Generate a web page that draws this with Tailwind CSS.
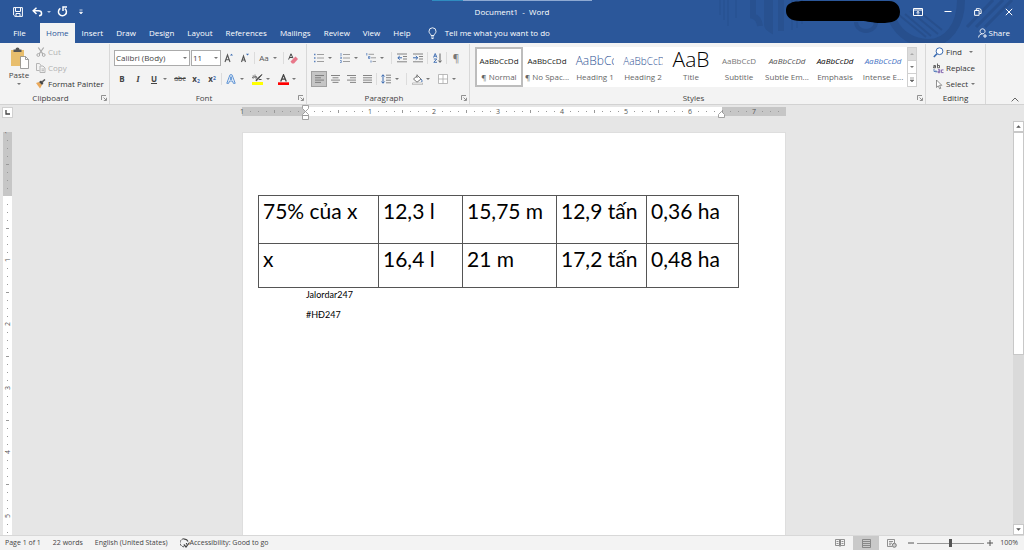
<!DOCTYPE html>
<html lang="en">
<head>
  <meta charset="UTF-8">
  <title>Document1 - Word</title>
  <script src="https://cdn.jsdelivr.net/npm/@tailwindcss/browser@4"></script>
</head>
<body class="h-screen flex flex-col overflow-hidden bg-[#e6e6e6] text-[8px] leading-[10px] text-[#444] font-['Open_Sans',sans-serif]">

  <svg class="hidden">
    <symbol id="caret" viewBox="0 0 6 4"><path d="M1 1h4L3 3z" fill="currentColor"/></symbol>
    <symbol id="launcher" viewBox="0 0 6 6"><path d="M.5 5V.5H5M2.5 2.5L5 5M5.5 2.8v2.7H2.8" fill="none" stroke="#777" stroke-width=".8"/></symbol>
  </svg>

  <!-- Title bar and tabs -->
  <header class="relative shrink-0 bg-[#2b579a] text-white">
    <svg class="absolute top-0 right-0 w-[344px] h-[43px]" viewBox="0 0 344 43" fill="none" stroke="#274f8d">
      <path d="M40 0v15M44 0v20M48 0v26M56 0v18" stroke-width="1.500" stroke="#295393"/>
      <path d="M73 0v16q6 2 7 10M87 0v24q0 3 3 5V0M101 0v31" stroke-width="6" stroke="#285190"/>
      <path d="M112 0v30M117 0v28M122 0v24" stroke-width="1.500" stroke="#295393"/>
      <path d="M176 22a10 9 0 0 0 20 0" stroke-width="4"/>
      <path d="M213 21c7 14 20 22 35 22 20 0 33-18 33-43" stroke-width="8"/>
      <path d="M219 15l27 22M225 14l26 22M230 11l28 23M236 9l26 21" stroke-width="2"/>
      <path d="M287 27L313 0M296 27L323 0M305 27L332 0" stroke-width="3"/>
    </svg>
    <svg class="absolute top-0 left-[432px] w-40 h-px" viewBox="0 0 160 1"><path d="M0 0h31v1H0z" fill="#2f8cc0"/><path d="M31 0h129v1H31z" fill="#8ea9d2"/></svg>

    <div class="relative h-[23px] flex items-center justify-between">
      <div class="w-[440px] flex items-center pl-[13px]">
        <button aria-label="Save" class="w-[19px]"><svg class="size-[10px]" viewBox="0 0 10 10"><path d="M.6.6h8.800v8.800H2L.6 8zM2.500 1v3.500h5V1M3 9V6.500h4V9" fill="none" stroke="#fff"/></svg></button>
        <button aria-label="Undo" class="w-[14px]"><svg class="w-[11px] h-[10px]" viewBox="0 0 11 10"><path d="M4.500.8L1.200 3.800 4.500 7M1.400 3.800h5.100c4 0 4 4.700.5 4.900" fill="none" stroke="#fff" stroke-width="1.500"/></svg></button>
        <svg class="w-[6px] h-1 mr-[5px] text-[#b5c6e0]"><use href="#caret"/></svg>
        <button aria-label="Repeat" class="w-[21px]"><svg class="size-[11px]" viewBox="0 0 11 11"><path d="M3.400 2.400A4 4 0 1 0 7.800 2.600M6 5V1h4" fill="none" stroke="#fff" stroke-width="1.500"/></svg></button>
        <button aria-label="Customize Quick Access Toolbar"><svg class="w-[6px] h-[6px]" viewBox="0 0 6 6"><path d="M1.500 1h3M1.500 3.200h3L3 5z" stroke="#fff" stroke-width=".7" fill="#fff"/></svg></button>
      </div>
      <h1>Document1&nbsp; -&nbsp; Word</h1>
      <div class="w-[440px] flex items-center justify-end pr-[11px]">
        <svg class="w-[116px] h-[23px] mr-[11px]" viewBox="0 0 116 23"><path d="M5 3C8 .8 11 2 15 1h88c8 0 11 6 11 11 0 9-8 11-19 11-9 0-13-2-20-2H14C5 21 0 17 0 11 0 6 2 4 5 3z" fill="#000"/></svg>
        <button aria-label="Ribbon Display Options" class="w-[31px]"><svg class="w-[10px] h-[8px]" viewBox="0 0 10 8"><path d="M.5.500h9v7h-9zM.5 2h9M5 6.500V3.500M3.500 4.800L5 3.400l1.500 1.400" fill="none" stroke="#fff"/></svg></button>
        <button aria-label="Minimize" class="w-[30px]"><svg class="w-[8px] h-[8px]" viewBox="0 0 8 8"><path d="M.5 3.500h7" stroke="#fff"/></svg></button>
        <button aria-label="Restore" class="w-[31px]"><svg class="w-[8px] h-[8px]" viewBox="0 0 8 8"><path d="M.6 2.500h4.500v4.800H.6zM2.300 2V.7h3q1.800 0 1.800 1.800v3H5.500" fill="none" stroke="#fff"/></svg></button>
        <button aria-label="Close"><svg class="w-[8px] h-[8px]" viewBox="0 0 8 8"><path d="M.8.8l6.400 6.400M7.200.8L.8 7.200" stroke="#fff"/></svg></button>
      </div>
    </div>

    <nav class="relative h-5 flex items-stretch gap-px">
      <button class="w-[39px]">File</button>
      <button class="px-[6px] bg-[#f3f3f3] text-[#2b579a]">Home</button>
      <button class="px-[6px]">Insert</button>
      <button class="px-[6px]">Draw</button>
      <button class="px-[6px]">Design</button>
      <button class="px-[6px]">Layout</button>
      <button class="px-[6px]">References</button>
      <button class="px-[6px]">Mailings</button>
      <button class="px-[6px]">Review</button>
      <button class="px-[6px]">View</button>
      <button class="px-[6px]">Help</button>
      <button class="flex items-center gap-2 px-[10px]">
        <svg class="w-[9px] h-3" viewBox="0 0 9 12"><path d="M3 8.500C3 7 1 6.500 1 4.300a3.500 3.500 0 0 1 7 0C8 6.500 6 7 6 8.500zM3 10h3M3.500 11.500h2" fill="none" stroke="#fff" stroke-width=".9"/></svg>
        Tell me what you want to do
      </button>
      <button class="ml-auto mr-[14px] flex items-center gap-[2px]">
        <svg class="w-[9px] h-[10px]" viewBox="0 0 9 10"><path d="M4.500 5.800a2.500 2.500 0 1 1 .1 0M.6 9.500C.8 7 2.500 5.800 4.500 5.800M7 6v4M5 8h4" fill="none" stroke="#fff" stroke-width=".9"/></svg>
        Share
      </button>
    </nav>
  </header>

  <!-- Ribbon -->
  <section class="h-[62px] shrink-0 flex bg-[#f3f3f3] border-b border-[#d2d2d2] pt-px">
    <div class="w-[110px] flex flex-col border-r border-[#d8d8d8]">
      <div class="flex-1 flex">
        <button class="w-[36px] pl-[2px] pt-[3px] flex flex-col items-center">
          <svg class="w-[19px] h-[22px]" viewBox="0 0 19 22"><path d="M1 3h13v16H1z" fill="#e8be6d"/><path d="M3.500 2.500h2a2 2 0 0 1 4 0h2V5h-8z" fill="#555"/><path d="M10.500 9.500h5l3 3v9h-8z" fill="#fff" stroke="#888" stroke-width=".8"/><path d="M15.500 9.500v3h3" fill="none" stroke="#888" stroke-width=".8"/></svg>
          <span class="mt-px">Paste</span>
          <svg class="w-[6px] h-1 mt-[2px] text-[#777]"><use href="#caret"/></svg>
        </button>
        <div class="flex flex-col text-[#b1b1b1]">
          <button class="h-4 flex items-center gap-[2px]"><svg class="size-[10px]" viewBox="0 0 10 10"><path d="M2.300.5l4.500 6.300M7.700.5L3.200 6.800" stroke="#aaa" stroke-width="1.200"/><g fill="none" stroke="#aaa"><circle cx="2.300" cy="8" r="1.400"/><circle cx="7.700" cy="8" r="1.400"/></g></svg>Cut</button>
          <button class="h-4 flex items-center gap-[2px]"><svg class="size-[10px]" viewBox="0 0 10 10"><path d="M3.500 7.500h-3v-7h3l1.500 2M4 3h3l2 2v4.500H4zM5.500 6h2.500M5.500 7.700h2.500" fill="none" stroke="#b5b5b5"/></svg>Copy</button>
          <button class="h-4 flex items-center gap-[2px] text-[#333]"><svg class="size-[10px]" viewBox="0 0 10 10"><path d="M0 4l3-1 3 3-2 3.500z" fill="#eaa95b"/><path d="M3 3l2-1.500L7.500 4 6 6z" fill="#444"/><path d="M6.200 2.800L9 .5" stroke="#555" stroke-width="1.500"/></svg>Format Painter</button>
        </div>
      </div>
      <div class="h-3 flex items-center"><span class="flex-1 text-center">Clipboard</span><button aria-label="Clipboard options" class="mr-[2px]"><svg class="size-[6px]"><use href="#launcher"/></svg></button></div>
    </div>

    <div class="w-[197px] flex flex-col border-r border-[#d8d8d8]">
      <div class="flex-1 pl-1 flex flex-col pt-[5px] text-[#777]">
        <div class="h-[18px] flex items-center">
          <label class="relative w-[76px]"><select aria-label="Font" class="appearance-none w-full h-4 px-px bg-white border border-[#ababab] text-[#444]"><option>Calibri (Body)</option></select><svg class="absolute right-[2px] top-[6px] w-[6px] h-1"><use href="#caret"/></svg></label>
          <label class="relative w-[30px] ml-px"><select aria-label="Font size" class="appearance-none w-full h-4 px-px bg-white border border-[#ababab] text-[#444]"><option>11</option></select><svg class="absolute right-[2px] top-[6px] w-[6px] h-1"><use href="#caret"/></svg></label>
          <button aria-label="Grow font" class="w-4"><svg class="size-[10px] mx-auto" viewBox="0 0 10 10"><path d="M1 9l2.500-7L6 9M1.800 6.700h3.400" fill="none" stroke="#555" stroke-width="1.100"/><path d="M6 2.500L7.500.8 9 2.500z" fill="#3a6ab0"/></svg></button>
          <button aria-label="Shrink font" class="w-4"><svg class="size-[10px] mx-auto" viewBox="0 0 10 10"><path d="M1.500 9l2-6 2 6M2 7h3" fill="none" stroke="#555" stroke-width="1.100"/><path d="M6 .8h3L7.500 2.500z" fill="#3a6ab0"/></svg></button>
          <span class="w-px h-3 bg-[#dcdcdc] mx-px"></span>
          <button class="w-4 text-center text-[#555]">Aa</button>
          <svg class="w-[6px] h-1 mr-1"><use href="#caret"/></svg>
          <span class="w-px h-3 bg-[#dcdcdc] mx-px"></span>
          <button aria-label="Clear formatting" class="w-4"><svg class="w-[10px] h-[11px] mx-auto" viewBox="0 0 10 11"><path d="M.6 6.500L3 .8l2 4.500M1.500 4.500h3" fill="none" stroke="#444"/><path d="M2.500 8.500l5-5L10 6l-4 4.500H4z" fill="#e8788a"/></svg></button>
        </div>
        <div class="h-6 flex items-center">
          <button class="w-4 font-bold text-[#444]">B</button>
          <button class="w-4 italic font-bold text-[9px] text-[#444] font-['Liberation_Serif',serif]">I</button>
          <button class="w-4 underline font-bold text-[#444]">U</button>
          <svg class="w-[6px] h-1 mr-1"><use href="#caret"/></svg>
          <button class="w-4 line-through text-[7px] text-[#444]">abc</button>
          <button class="w-4 font-bold text-[#444]">x<sub class="text-[5px] text-[#3a6ab0]">2</sub></button>
          <button class="w-4 font-bold text-[#444]">x<sup class="text-[5px] text-[#3a6ab0]">2</sup></button>
          <span class="w-px h-3 bg-[#dcdcdc] mx-px"></span>
          <button aria-label="Text effects" class="w-4"><svg class="size-[10px] mx-auto" viewBox="0 0 10 10"><path d="M.8 9.300L4 .8h2l3.200 8.500H7.300L6.600 7H3.400l-.7 2.300zM4 5.300h2L5 2.500z" fill="#fff" stroke="#4a86cf" stroke-width=".9"/></svg></button>
          <svg class="w-[6px] h-1 mr-1"><use href="#caret"/></svg>
          <button aria-label="Text highlight color" class="w-4"><svg class="size-[11px] mx-auto" viewBox="0 0 11 11"><path d="M0 8h11v3H0z" fill="#ff0"/><path d="M10 .5L5.500 6 4 7l.5-2zM7 5.500h2.500" fill="#555" stroke="#555"/><path d="M.5 2h1.500v2H.5v-1M3 .5V4h1.500V2.500H3" fill="none" stroke="#555" stroke-width=".7"/></svg></button>
          <svg class="w-[6px] h-1 mr-1"><use href="#caret"/></svg>
          <button aria-label="Font color" class="w-4"><svg class="size-[11px] mx-auto" viewBox="0 0 11 11"><path d="M0 8.300h11V11H0z" fill="#f00"/><path d="M2.700 7.500L5.500.8l2.800 6.700M3.700 5.200h3.600" fill="none" stroke="#444" stroke-width="1.300"/></svg></button>
          <svg class="w-[6px] h-1"><use href="#caret"/></svg>
        </div>
      </div>
      <div class="h-3 flex items-center"><span class="flex-1 text-center">Font</span><button aria-label="Font options" class="mr-[2px]"><svg class="size-[6px]"><use href="#launcher"/></svg></button></div>
    </div>

    <div class="w-[163px] flex flex-col border-r border-[#d8d8d8]">
      <div class="flex-1 pl-1 flex flex-col pt-[5px] text-[#777]">
        <div class="h-[18px] flex items-center">
          <button aria-label="Bullets" class="w-4"><svg class="size-[10px] mx-auto" viewBox="0 0 10 10"><path d="M0 1.500h1.500M0 5h1.500M0 8.500h1.500" stroke="#5b82bd" stroke-width="1.500"/><path d="M3 1.500h7M3 5h7M3 8.500h7" stroke="#888" stroke-width=".8"/></svg></button>
          <svg class="w-[6px] h-1 mr-1"><use href="#caret"/></svg>
          <button aria-label="Numbering" class="w-4"><svg class="size-[10px] mx-auto" viewBox="0 0 10 10"><path d="M1 0v3M0 4.200h1.500V5.500H.3M0 7.500h1.300v2H0" fill="none" stroke="#5b82bd" stroke-width=".8"/><path d="M3 1.500h7M3 5h7M3 8.500h7" stroke="#888" stroke-width=".8"/></svg></button>
          <svg class="w-[6px] h-1 mr-1"><use href="#caret"/></svg>
          <button aria-label="Multilevel list" class="w-4"><svg class="size-[10px] mx-auto" viewBox="0 0 10 10"><path d="M.8 0v2.500M2.500 3.500h1.300v2H2.500zM5 7.500v2" fill="none" stroke="#5b82bd" stroke-width=".9"/><path d="M2.500 1.300H8M5 4.800h5M6.500 8.500H10" stroke="#888" stroke-width=".8"/></svg></button>
          <svg class="w-[6px] h-1 mr-1"><use href="#caret"/></svg>
          <span class="w-px h-3 bg-[#dcdcdc] mx-[2px]"></span>
          <button aria-label="Decrease indent" class="w-4"><svg class="size-[10px] mx-auto" viewBox="0 0 10 10"><path d="M0 1h10M6 3.500h4M6 6h4M0 8.800h10" stroke="#777" stroke-width=".9"/><path d="M5 4.800H1M2.800 3L.8 4.800l2 1.800" fill="none" stroke="#3a6ab0"/></svg></button>
          <button aria-label="Increase indent" class="w-4"><svg class="size-[10px] mx-auto" viewBox="0 0 10 10"><path d="M0 1h10M6 3.500h4M6 6h4M0 8.800h10" stroke="#777" stroke-width=".9"/><path d="M0 4.800h4.500M2.800 3l2 1.800-2 1.800" fill="none" stroke="#3a6ab0"/></svg></button>
          <span class="w-px h-3 bg-[#dcdcdc] mx-px"></span>
          <button aria-label="Sort" class="w-4"><svg class="w-[9px] h-[10px] mx-auto" viewBox="0 0 9 10"><path d="M.5 4.500L2.200.5l1.700 4M1 3.200h2.400M.8 6h3l-3 3.300h3.200" fill="none" stroke="#3a6ab0" stroke-width=".9"/><path d="M7 .5v8.800M5.300 7.500L7 9.300l1.700-1.800" fill="none" stroke="#555" stroke-width=".9"/></svg></button>
          <span class="w-px h-3 bg-[#dcdcdc] mx-px"></span>
          <button class="w-4 text-[10px]">¶</button>
        </div>
        <div class="h-6 flex items-center">
          <button aria-label="Align left" class="size-4 bg-[#c5c5c5] border border-[#a0a0a0]"><svg class="w-[9px] h-[8px] mx-auto" viewBox="0 0 9 8"><path d="M0 .5h9M0 2.800h6M0 5.100h9M0 7.400h6" stroke="#777" stroke-width=".9"/></svg></button>
          <button aria-label="Center" class="w-4"><svg class="w-[9px] h-[8px] mx-auto" viewBox="0 0 9 8"><path d="M0 .5h9M1.500 2.800h6M0 5.100h9M1.500 7.400h6" stroke="#777" stroke-width=".9"/></svg></button>
          <button aria-label="Align right" class="w-4"><svg class="w-[9px] h-[8px] mx-auto" viewBox="0 0 9 8"><path d="M0 .5h9M3 2.800h6M0 5.100h9M3 7.400h6" stroke="#777" stroke-width=".9"/></svg></button>
          <button aria-label="Justify" class="w-4"><svg class="w-[9px] h-[8px] mx-auto" viewBox="0 0 9 8"><path d="M0 .5h9M0 2.800h9M0 5.100h9M0 7.400h9" stroke="#777" stroke-width=".9"/></svg></button>
          <span class="w-px h-3 bg-[#dcdcdc] mx-px"></span>
          <button aria-label="Line spacing" class="w-4"><svg class="size-[10px] mx-auto" viewBox="0 0 10 10"><path d="M2 .8v8.400M.4 2.500L2 .8l1.600 1.700M.4 7.500L2 9.200l1.600-1.700" fill="none" stroke="#3a6ab0"/><path d="M5 1.200h5M5 3.700h5M5 6.200h5M5 8.800h5" stroke="#777" stroke-width=".9"/></svg></button>
          <svg class="w-[6px] h-1 mr-1"><use href="#caret"/></svg>
          <span class="w-px h-3 bg-[#dcdcdc] mx-[2px]"></span>
          <button aria-label="Shading" class="w-4"><svg class="size-[11px] mx-auto" viewBox="0 0 11 11"><path d="M1.500 5L5.500 1.500 9 5 5 8.200zM5 4V.5" fill="#fff" stroke="#666" stroke-width=".9"/><path d="M9 5q1.500 1.500.8 3" fill="none" stroke="#3a6ab0"/><path d="M.5 9h10v1.600H.5z" fill="#fff" stroke="#999" stroke-width=".6"/></svg></button>
          <svg class="w-[6px] h-1 mr-1"><use href="#caret"/></svg>
          <button aria-label="Borders" class="w-4"><svg class="size-[10px] mx-auto" viewBox="0 0 10 10"><path d="M.5.500h9v9h-9zM5 .5v9M.5 5h9" fill="#fff" stroke="#aaa" stroke-width=".8"/></svg></button>
          <svg class="w-[6px] h-1"><use href="#caret"/></svg>
        </div>
      </div>
      <div class="h-3 flex items-center"><span class="flex-1 text-center">Paragraph</span><button aria-label="Paragraph options" class="mr-[2px]"><svg class="size-[6px]"><use href="#launcher"/></svg></button></div>
    </div>

    <div class="flex-1 min-w-0 flex flex-col border-r border-[#d8d8d8]">
      <div class="flex-1 pt-[3px] pl-[5px] pr-2 flex">
        <div class="h-10 flex-1 min-w-0 flex bg-white text-center text-[#666]">
          <button class="flex-1 min-w-0 overflow-hidden whitespace-nowrap border-2 border-[#bdbdbd]"><span class="block h-[20px] leading-[22px] text-[#222]">AaBbCcDd</span><span class="block leading-[14px]">¶ Normal</span></button>
          <button class="flex-1 min-w-0 overflow-hidden whitespace-nowrap border-2 border-transparent"><span class="block h-[20px] leading-[22px] text-[#222]">AaBbCcDd</span><span class="block leading-[14px]">¶ No Spac...</span></button>
          <button class="flex-1 min-w-0 overflow-hidden whitespace-nowrap border-2 border-transparent"><span class="block h-[20px] leading-[22px] text-[12px] font-light text-[#2f5496]">AaBbC<span class="inline-block w-[3px] overflow-hidden align-bottom">c</span></span><span class="block leading-[14px]">Heading 1</span></button>
          <button class="flex-1 min-w-0 overflow-hidden whitespace-nowrap border-2 border-transparent"><span class="block h-[20px] leading-[22px] text-[10px] font-light text-[#2f5496]">AaBbCc<span class="inline-block w-[5px] overflow-hidden align-bottom">D</span></span><span class="block leading-[14px]">Heading 2</span></button>
          <button class="flex-1 min-w-0 overflow-hidden whitespace-nowrap border-2 border-transparent"><span class="block h-[20px] leading-[18px] text-[21px] font-light text-black">AaB</span><span class="block leading-[14px]">Title</span></button>
          <button class="flex-1 min-w-0 overflow-hidden whitespace-nowrap border-2 border-transparent"><span class="block h-[20px] leading-[22px] text-[#777]">AaBbCcD</span><span class="block leading-[14px]">Subtitle</span></button>
          <button class="flex-1 min-w-0 overflow-hidden whitespace-nowrap border-2 border-transparent"><span class="block h-[20px] leading-[22px] italic text-[#505050]">AaBbCcDd</span><span class="block leading-[14px]">Subtle Em...</span></button>
          <button class="flex-1 min-w-0 overflow-hidden whitespace-nowrap border-2 border-transparent"><span class="block h-[20px] leading-[22px] italic text-black">AaBbCcDd</span><span class="block leading-[14px]">Emphasis</span></button>
          <button class="flex-1 min-w-0 overflow-hidden whitespace-nowrap border-2 border-transparent"><span class="block h-[20px] leading-[22px] italic text-[#4472c4]">AaBbCcDd</span><span class="block leading-[14px]">Intense E...</span></button>
          <div class="w-[10px] flex flex-col border border-[#d0d0d0] text-[#777]">
            <button aria-label="Scroll up" class="flex-1 bg-[#dcdcdc]"><svg class="w-[6px] h-1 mx-auto rotate-180 text-[#aaa]"><use href="#caret"/></svg></button>
            <button aria-label="Scroll down" class="flex-1 border-y border-[#d0d0d0]"><svg class="w-[6px] h-1 mx-auto"><use href="#caret"/></svg></button>
            <button aria-label="More styles" class="flex-1"><svg class="w-[6px] h-[6px] mx-auto" viewBox="0 0 6 6"><path d="M1 1h4M1 3h4L3 5z" stroke="#666" stroke-width=".6" fill="#666"/></svg></button>
          </div>
        </div>
      </div>
      <div class="h-3 flex items-center"><span class="flex-1 text-center">Styles</span><button aria-label="Styles options" class="mr-[2px]"><svg class="size-[6px]"><use href="#launcher"/></svg></button></div>
    </div>

    <div class="w-[60px] flex flex-col border-r border-[#d8d8d8] text-[#333]">
      <div class="flex-1 pl-[7px] flex flex-col">
        <button class="h-4 flex items-center gap-[2px]"><svg class="size-[11px]" viewBox="0 0 11 11"><circle cx="6.500" cy="4.200" r="3.400" fill="#fff" stroke="#3a6ab0"/><path d="M4 6.800L.8 10" stroke="#3a6ab0" stroke-width="1.600"/></svg>Find<svg class="w-[6px] h-1 ml-1 text-[#777]"><use href="#caret"/></svg></button>
        <button class="h-4 flex items-center gap-[2px]"><svg class="size-[11px]" viewBox="0 0 11 11"><path d="M.5 2.500h2v2.300h-2V3.700h2M4.500.5v4.300h2V2.500h-2" fill="none" stroke="#555" stroke-width=".9"/><path d="M1 6v2.500h2.500M2.700 7.300l1.200 1.200-1.200 1.200" fill="none" stroke="#3a6ab0" stroke-width=".8"/><path d="M5 6.700h1.800v3H5V8.200h1.800M10.500 6.900H8.400v2.700h2.100" fill="none" stroke="#7a5ba8" stroke-width=".9"/></svg>Replace</button>
        <button class="h-4 flex items-center gap-[2px]"><svg class="size-[11px]" viewBox="0 0 11 11"><path d="M3.500 1v7.500l1.800-1.700 1.300 3 1.200-.5-1.300-3h2.300z" fill="#fff" stroke="#777" stroke-width=".8"/></svg>Select<svg class="w-[6px] h-1 text-[#777]"><use href="#caret"/></svg></button>
      </div>
      <div class="h-3 leading-[12px] text-center">Editing</div>
    </div>

    <div class="w-[38px] flex items-end justify-end pr-[5px] pb-[2px]">
      <button aria-label="Collapse the Ribbon"><svg class="w-[8px] h-[5px]" viewBox="0 0 8 5"><path d="M.6 4.400L4 1l3.400 3.400" fill="none" stroke="#666"/></svg></button>
    </div>
  </section>

  <!-- Document area -->
  <main class="flex-1 min-h-0 flex">
    <div class="w-[15px] flex flex-col pl-[2px] pt-[2px]">
      <button aria-label="Tab selector" class="size-[11px] shrink-0 flex items-center justify-center bg-white border border-[#d0d0d0]"><svg class="size-[5px]" viewBox="0 0 5 5"><path d="M1 0v4h4" fill="none" stroke="#444" stroke-width="1.300"/></svg></button>
      <svg id="regla-v" class="w-[9px] flex-1 min-h-0 mt-[14px] ml-px bg-white overflow-hidden" font-size="7" fill="#555" text-anchor="middle"><rect width="9" height="64" fill="#c6c6c6"/></svg>
    </div>

    <div class="flex-1 min-w-0 flex flex-col items-center">
      <div class="relative h-[27px] shrink-0 w-[544px] pt-[2px]">
        <svg id="regla-h" class="w-[544px] h-[9px] bg-white overflow-visible" font-size="7" fill="#555" text-anchor="middle"><path d="M0 0h64v9H0zM480 0h64v9h-64z" fill="#c6c6c6"/></svg>
        <svg class="absolute left-[60px] top-0 w-[7px] h-4" viewBox="0 0 7 16"><path d="M.5.500h6v3l-3 3-3-3zM.5 10.500v-1l3-3 3 3v1zM.5 10.500h6v4h-6z" fill="#fff" stroke="#999" stroke-width=".9"/></svg>
        <svg class="absolute left-[476px] top-1.5 w-[7px] h-[7px]" viewBox="0 0 7 7"><path d="M.5 6.500v-3l3-3 3 3v3z" fill="#fff" stroke="#999" stroke-width=".9"/></svg>
      </div>

      <article class="w-[544px] flex-1 bg-white border border-b-0 border-[#dedede] text-black font-['Lato','Open_Sans',sans-serif]">
        <table class="w-[481px] ml-[15px] mt-[62px] table-fixed border-collapse text-[21px] leading-[29px]">
          <colgroup><col class="w-[120px]"><col class="w-[84px]"><col class="w-[94px]"><col class="w-[90px]"><col class="w-[92px]"></colgroup>
          <tr class="h-[48px] align-top whitespace-nowrap">
            <td class="border border-[#555] pl-1">75% của x</td>
            <td class="border border-[#555] pl-1">12,3 l</td>
            <td class="border border-[#555] pl-1">15,75 m</td>
            <td class="border border-[#555] pl-1">12,9 tấn</td>
            <td class="border border-[#555] pl-1">0,36 ha</td>
          </tr>
          <tr class="h-[44px] align-top whitespace-nowrap">
            <td class="border border-[#555] pl-1">x</td>
            <td class="border border-[#555] pl-1">16,4 l</td>
            <td class="border border-[#555] pl-1">21 m</td>
            <td class="border border-[#555] pl-1">17,2 tấn</td>
            <td class="border border-[#555] pl-1">0,48 ha</td>
          </tr>
        </table>
        <div class="ml-[63px] mt-[2px] flex flex-col gap-[10px] text-[9px]">
          <p>Jalordar247</p>
          <p>#HĐ247</p>
        </div>
      </article>
    </div>

    <div class="w-[11px] flex flex-col pt-4 bg-[#e6e6e6]">
      <button aria-label="Scroll up" class="h-[11px] flex items-center justify-center bg-white border border-[#c8c8c8]"><svg class="w-[7px] h-[5px] rotate-180 text-[#555]"><use href="#caret"/></svg></button>
      <div class="flex-1 bg-[#dadada]"><div class="h-[57%] bg-white border border-[#c8c8c8]"></div></div>
      <button aria-label="Scroll down" class="h-[11px] flex items-center justify-center bg-white border border-[#c8c8c8]"><svg class="w-[7px] h-[5px] text-[#555]"><use href="#caret"/></svg></button>
    </div>
  </main>

  <!-- Status bar -->
  <footer class="h-[15px] shrink-0 flex items-center gap-3 pl-[5px] pr-[6px] bg-[#f3f3f3] border-t border-[#d8d8d8] text-[7px]">
    <span>Page 1 of 1</span>
    <span>22 words</span>
    <span>English (United States)</span>
    <button class="flex items-center"><svg class="size-[10px]" viewBox="0 0 10 10"><path d="M4 .8A4 4 0 0 0 4 8.800" fill="none" stroke="#444" stroke-dasharray="2.500 1"/><path d="M4 1.200A3.800 3.800 0 0 1 8 3.500M3.800 6.500L6 9l3.500-4.500M6.500 5v1.500" fill="none" stroke="#444" stroke-width="1.200"/></svg>Accessibility: Good to go</button>
    <div class="ml-auto h-full flex items-center">
      <button aria-label="Read Mode" class="w-[26px]"><svg class="w-[10px] h-[8px] mx-auto" viewBox="0 0 10 8"><path d="M.5.500h4v6h-4zM5.500.500h4v6h-4zM5 0v8M1.500 2.500h2M1.500 4.500h2M6.500 2.500h2M6.500 4.500h2" fill="none" stroke="#777" stroke-width=".8"/></svg></button>
      <button aria-label="Print Layout" class="w-[26px] h-full bg-[#c9c9c9]"><svg class="size-[9px] mx-auto" viewBox="0 0 9 9"><path d="M.5.500h8v8h-8zM1 2.500h7M1 4.500h7M1 6.500h7" fill="none" stroke="#777" stroke-width=".8"/></svg></button>
      <button aria-label="Web Layout" class="w-[26px]"><svg class="w-[10px] h-[9px] mx-auto" viewBox="0 0 10 9"><path d="M5 7.500H.5v-7h7V4M2 2.500h4M2 4.200h3M2 5.800h2" fill="none" stroke="#777" stroke-width=".8"/><circle cx="7.300" cy="6.300" r="2" fill="#ccc" stroke="#666" stroke-width=".8"/></svg></button>
      <button aria-label="Zoom out" class="mx-[3px]"><svg class="size-[6px]" viewBox="0 0 6 6"><path d="M0 3h6" stroke="#555"/></svg></button>
      <input type="range" aria-label="Zoom" min="0" max="200" value="100" class="appearance-none w-[67px] h-[10px] bg-[linear-gradient(#999,#999)] bg-[length:100%_1px] bg-center bg-no-repeat [&::-webkit-slider-thumb]:appearance-none [&::-webkit-slider-thumb]:w-[3px] [&::-webkit-slider-thumb]:h-2 [&::-webkit-slider-thumb]:bg-[#555]">
      <button aria-label="Zoom in" class="mx-[3px]"><svg class="size-[6px]" viewBox="0 0 6 6"><path d="M0 3h6M3 0v6" stroke="#555"/></svg></button>
      <span class="ml-1">100%</span>
    </div>
  </footer>

<script>
// one inch is 64px, the zero mark sits one inch in
function dibujarRegla(id, total, vertical) {
  const svg = document.getElementById(id);
  let html = "";
  for (let i = 0; i <= total; i++) {
    const p = i * 8;
    const n = Math.abs(i - 8) / 8;
    if (n === 0) continue;
    if (Number.isInteger(n)) {
      html += vertical
        ? `<text transform="translate(7 ${p}) rotate(-90)">${n}</text>`
        : `<text x="${p}" y="7">${n}</text>`;
    } else {
      const largo = i % 4 === 0 ? 3 : 1;
      html += vertical
        ? `<rect x="${(9 - largo) / 2}" y="${p}" width="${largo}" height="1" fill="#999"/>`
        : `<rect x="${p}" y="${(9 - largo) / 2}" width="1" height="${largo}" fill="#999"/>`;
    }
  }
  svg.innerHTML += html;
}

dibujarRegla("regla-h", 67, false);
dibujarRegla("regla-v", 55, true);
</script>

</body>
</html>
